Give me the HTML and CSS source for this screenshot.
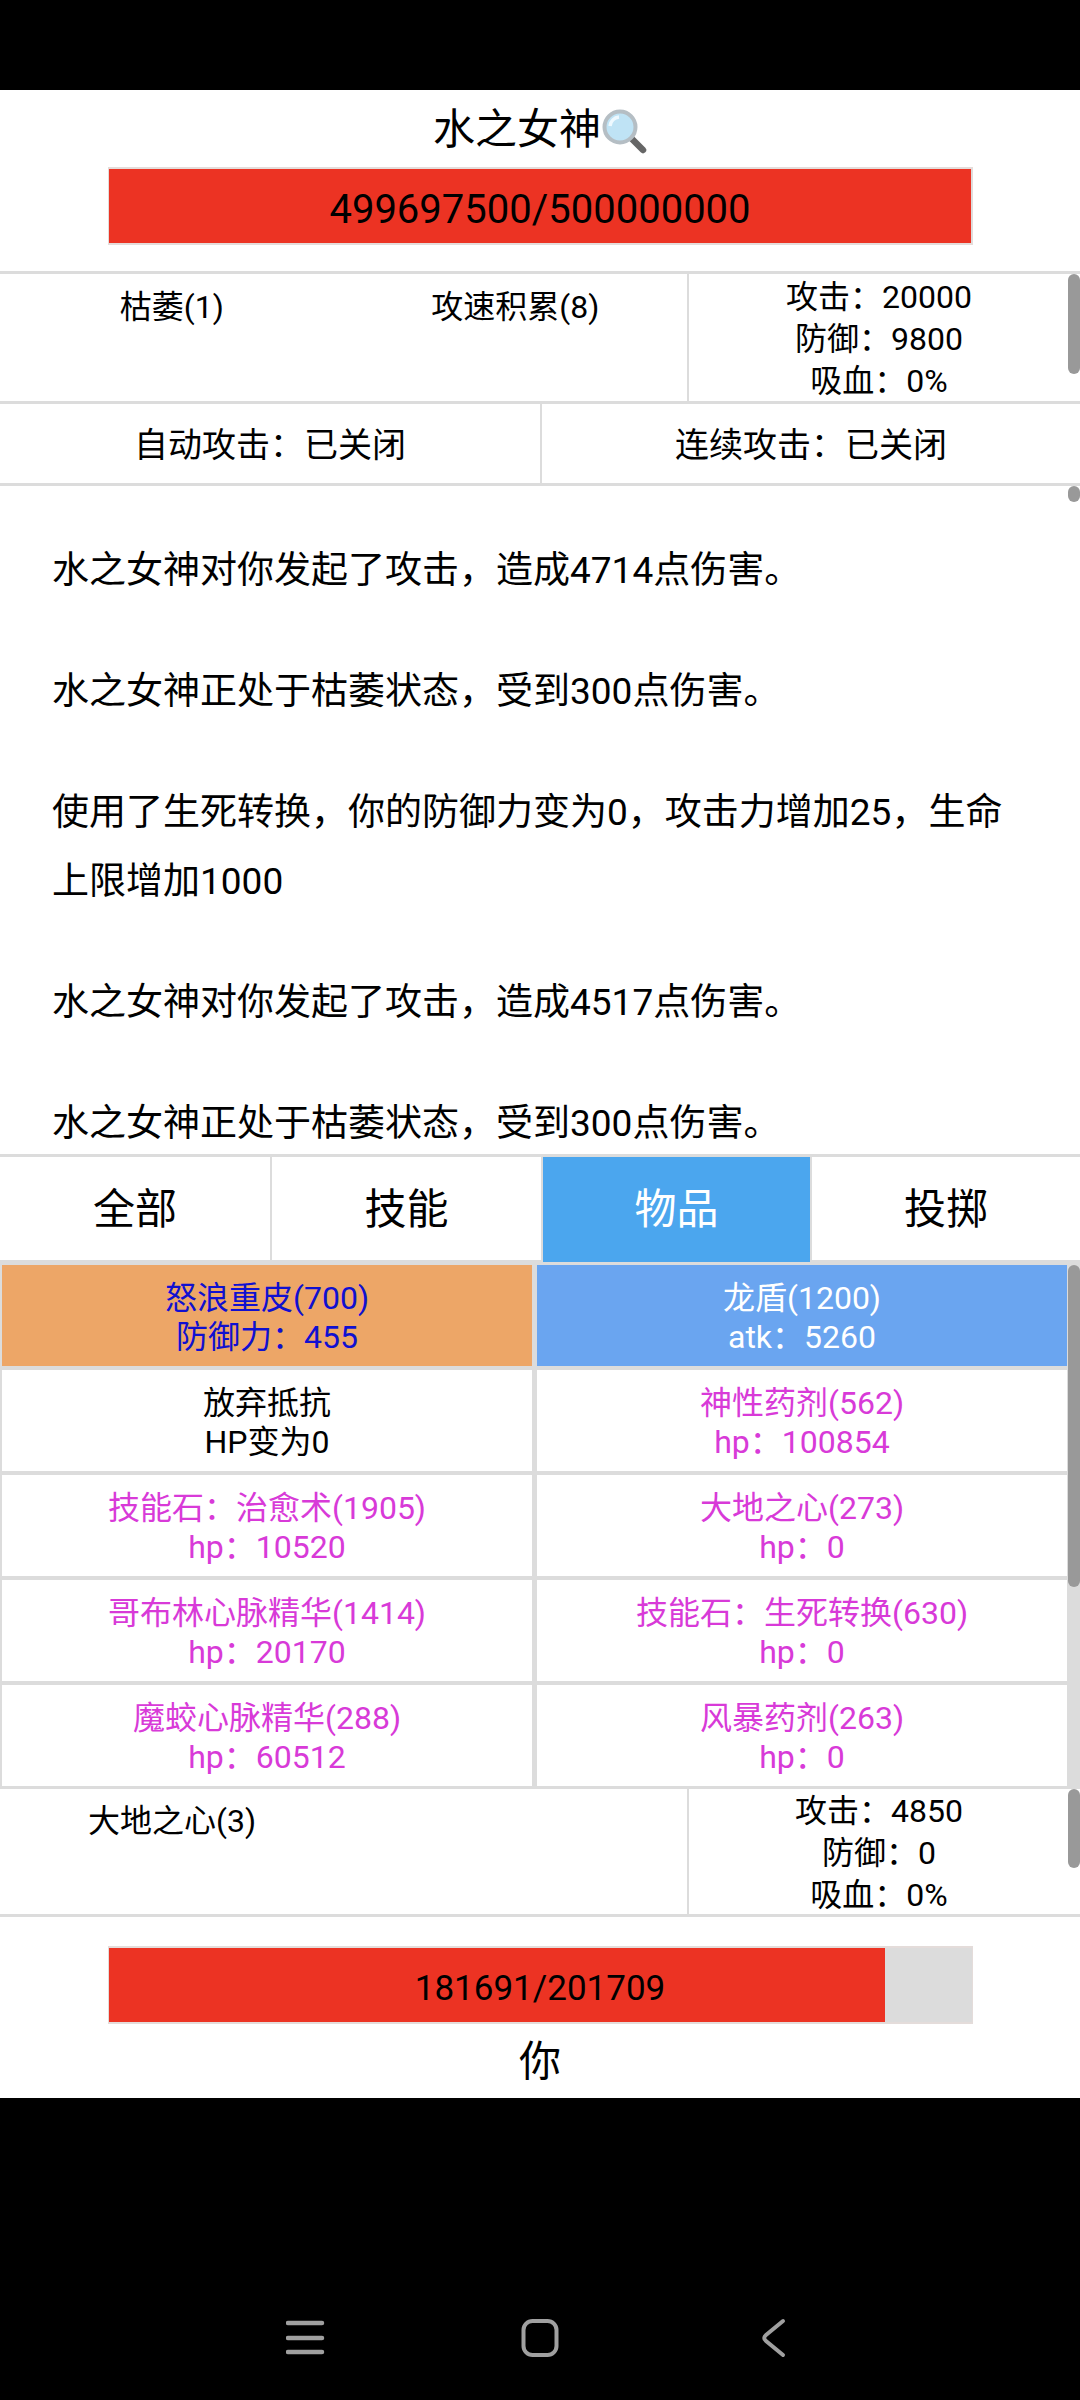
FILE: index.html
```html
<!DOCTYPE html>
<html lang="zh">
<head>
<meta charset="UTF-8">
<title>水之女神</title>
<link rel="stylesheet" href="styles.css">
</head>
<body>

<div class="statusbar"></div>

<main class="game">

    <!-- enemy -->
    <section class="enemy">
        <div class="name">水之女神<svg class="lens" viewBox="0 0 46 46" width="46" height="46">
            <path d="M29 29 L42 42" stroke="#666" stroke-width="6.5" stroke-linecap="round"/>
            <circle cx="19" cy="19" r="15.5" fill="#bfe3f5" stroke="#b5bec4" stroke-width="4"/>
            <path d="M9 18 A10 10 0 0 1 18 9" fill="none" stroke="#eef9ff" stroke-width="3.5"/>
        </svg></div>
        <div class="bar"><div class="fill" style="width:99.94%"></div><span class="bar-text bar-text-big">499697500/500000000</span></div>
    </section>

    <section class="status">
        <div class="buffs">
            <div class="buff">枯萎(1)</div>
            <div class="buff">攻速积累(8)</div>
        </div>
        <div class="stats">
            <div>攻击：20000</div>
            <div>防御：9800</div>
            <div>吸血：0%</div>
        </div>
        <div class="thumb thumb-status"></div>
    </section>

    <section class="toggles">
        <div class="toggle">自动攻击：已关闭</div>
        <div class="toggle">连续攻击：已关闭</div>
    </section>

    <!-- battle log -->
    <section class="log">
        <p>水之女神对你发起了攻击，造成4714点伤害。</p>
        <p>水之女神正处于枯萎状态，受到300点伤害。</p>
        <p>使用了生死转换，你的防御力变为0，攻击力增加25，生命上限增加1000</p>
        <p>水之女神对你发起了攻击，造成4517点伤害。</p>
        <p>水之女神正处于枯萎状态，受到300点伤害。</p>
        <div class="thumb thumb-log"></div>
    </section>

    <nav class="tabs">
        <div class="tab">全部</div>
        <div class="tab">技能</div>
        <div class="tab active">物品</div>
        <div class="tab">投掷</div>
    </nav>

    <!-- items -->
    <section class="items">
        <div class="item equip-armor"><div>怒浪重皮(700)</div><div>防御力：455</div></div>
        <div class="item equip-weapon"><div>龙盾(1200)</div><div>atk：5260</div></div>
        <div class="item"><div>放弃抵抗</div><div>HP变为0</div></div>
        <div class="item potion"><div>神性药剂(562)</div><div>hp：100854</div></div>
        <div class="item potion"><div>技能石：治愈术(1905)</div><div>hp：10520</div></div>
        <div class="item potion"><div>大地之心(273)</div><div>hp：0</div></div>
        <div class="item potion"><div>哥布林心脉精华(1414)</div><div>hp：20170</div></div>
        <div class="item potion"><div>技能石：生死转换(630)</div><div>hp：0</div></div>
        <div class="item potion"><div>魔蛟心脉精华(288)</div><div>hp：60512</div></div>
        <div class="item potion"><div>风暴药剂(263)</div><div>hp：0</div></div>
        <div class="thumb thumb-items"></div>
    </section>

    <section class="status status-player">
        <div class="buffs">
            <div class="buff">大地之心(3)</div>
        </div>
        <div class="stats">
            <div>攻击：4850</div>
            <div>防御：0</div>
            <div>吸血：0%</div>
        </div>
        <div class="thumb thumb-player"></div>
    </section>

    <!-- player -->
    <section class="player">
        <div class="bar"><div class="fill" style="width:90%"></div><span class="bar-text">181691/201709</span></div>
        <div class="name">你</div>
    </section>

</main>

<footer class="navbar">
    <svg viewBox="0 0 40 40" width="40" height="40"><path d="M2 5 H36 M2 20 H36 M2 34 H36" stroke="#a0a0a0" stroke-width="4.5" stroke-linecap="round"/></svg>
    <svg viewBox="0 0 40 40" width="40" height="40"><rect x="3.5" y="3" width="33" height="34" rx="9" fill="none" stroke="#a0a0a0" stroke-width="4"/></svg>
    <svg viewBox="0 0 40 40" width="40" height="40"><path d="M29 3 L12 17 Q8.5 20 12 23 L29 37" fill="none" stroke="#a0a0a0" stroke-width="4" stroke-linecap="round" stroke-linejoin="round"/></svg>
</footer>

</body>
</html>
```

FILE: styles.css
```css
* {
    box-sizing: border-box;
}

body {
    margin: 0;
    background: #000;
    color: #000;
    font-family: Roboto, "Noto Sans CJK SC", sans-serif;
    font-size: 32px;
    font-weight: 400;
}

.statusbar {
    height: 90px;
}

.game {
    height: 2008px;
    background: #fff;
}

/* ===== enemy / player ===== */
.enemy {
    height: 181px;
    text-align: center;
}

.name {
    height: 77px;
    padding-top: 14px;
    font-size: 42px;
    line-height: 52px;
}

.lens {
    vertical-align: -10px;
}

.bar {
    position: relative;
    width: 865px;
    height: 78px;
    margin: 0 auto;
    background: #dcdcdc;
    border: 2px solid #e4dcda;
    border-width: 2px 1px;
}

.fill {
    height: 100%;
    background: #ec3323;
}

.bar-text {
    position: absolute;
    inset: 0;
    text-align: center;
    font-size: 35px;
    line-height: 81px;
}

.bar-text-big {
    font-size: 40px;
}

/* ===== status rows ===== */
.status {
    position: relative;
    display: flex;
    height: 133px;
    border-top: 3px solid #dcdcdc;
    border-bottom: 3px solid #dcdcdc;
}

.status-player {
    height: 130px;
    border-top-width: 2px;
}

.buffs {
    display: flex;
    width: 689px;
    padding-top: 13px;
    border-right: 2px solid #dcdcdc;
}

.status-player .buffs {
    padding-top: 12px;
}

.buff {
    width: 344px;
    line-height: 40px;
    text-align: center;
}

.stats {
    flex: 1;
    padding-right: 11px;
    text-align: center;
    line-height: 42px;
    margin-top: 2px;
}

.status-player .stats {
    margin-top: 1px;
}

.thumb {
    position: absolute;
    top: 0;
    right: 0;
    width: 12px;
    background: #999;
    border-radius: 6px;
}

.thumb-status {
    height: 100px;
}

.thumb-player {
    height: 79px;
}

.thumb-log {
    height: 16px;
}

.thumb-items {
    top: 2px;
    height: 322px;
}

.toggles {
    display: flex;
    height: 82px;
    border-bottom: 3px solid #dcdcdc;
}

.toggle {
    flex: 1;
    text-align: center;
    line-height: 82px;
    font-size: 34px;
}

.toggle:first-child {
    flex: none;
    width: 542px;
    border-right: 2px solid #dcdcdc;
}

/* ===== log ===== */
.log {
    position: relative;
    height: 671px;
    padding: 50px 60px 0 52px;
    overflow: hidden;
    border-bottom: 3px solid #dcdcdc;
}

.log p {
    margin: 0 0 52px;
    font-size: 37px;
    line-height: 69px;
}

/* ===== tabs ===== */
.tabs {
    display: grid;
    grid-template-columns: 272px 271px 269px 1fr;
    height: 106px;
    border-bottom: 3px solid #dcdcdc;
}

.tab {
    text-align: center;
    font-size: 42px;
    line-height: 105px;
    border-right: 2px solid #dcdcdc;
}

.tab:last-child {
    border-right: 0;
}

.tab.active {
    background: #4ba6ee;
    color: #fff;
}

/* ===== items ===== */
.items {
    position: relative;
    display: grid;
    grid-template-columns: 530px 530px;
    grid-auto-rows: 101px;
    gap: 4px 5px;
    height: 524px;
    padding: 2px 13px 0 2px;
    background: #dcdcdc;
}

.item {
    padding-top: 14px;
    background: #fff;
    text-align: center;
    line-height: 39px;
}

.equip-armor {
    background: #eda667;
    color: #1010d0;
}

.equip-weapon {
    background: #6aa5f0;
    color: #fff;
}

.potion {
    color: #d83ad8;
}

/* ===== player ===== */
.player {
    padding-top: 29px;
    text-align: center;
}

.player .name {
    height: auto;
    padding-top: 12px;
}

/* ===== nav ===== */
.navbar {
    display: flex;
    justify-content: center;
    gap: 194px;
    padding-top: 220px;
    height: 302px;
}
```
